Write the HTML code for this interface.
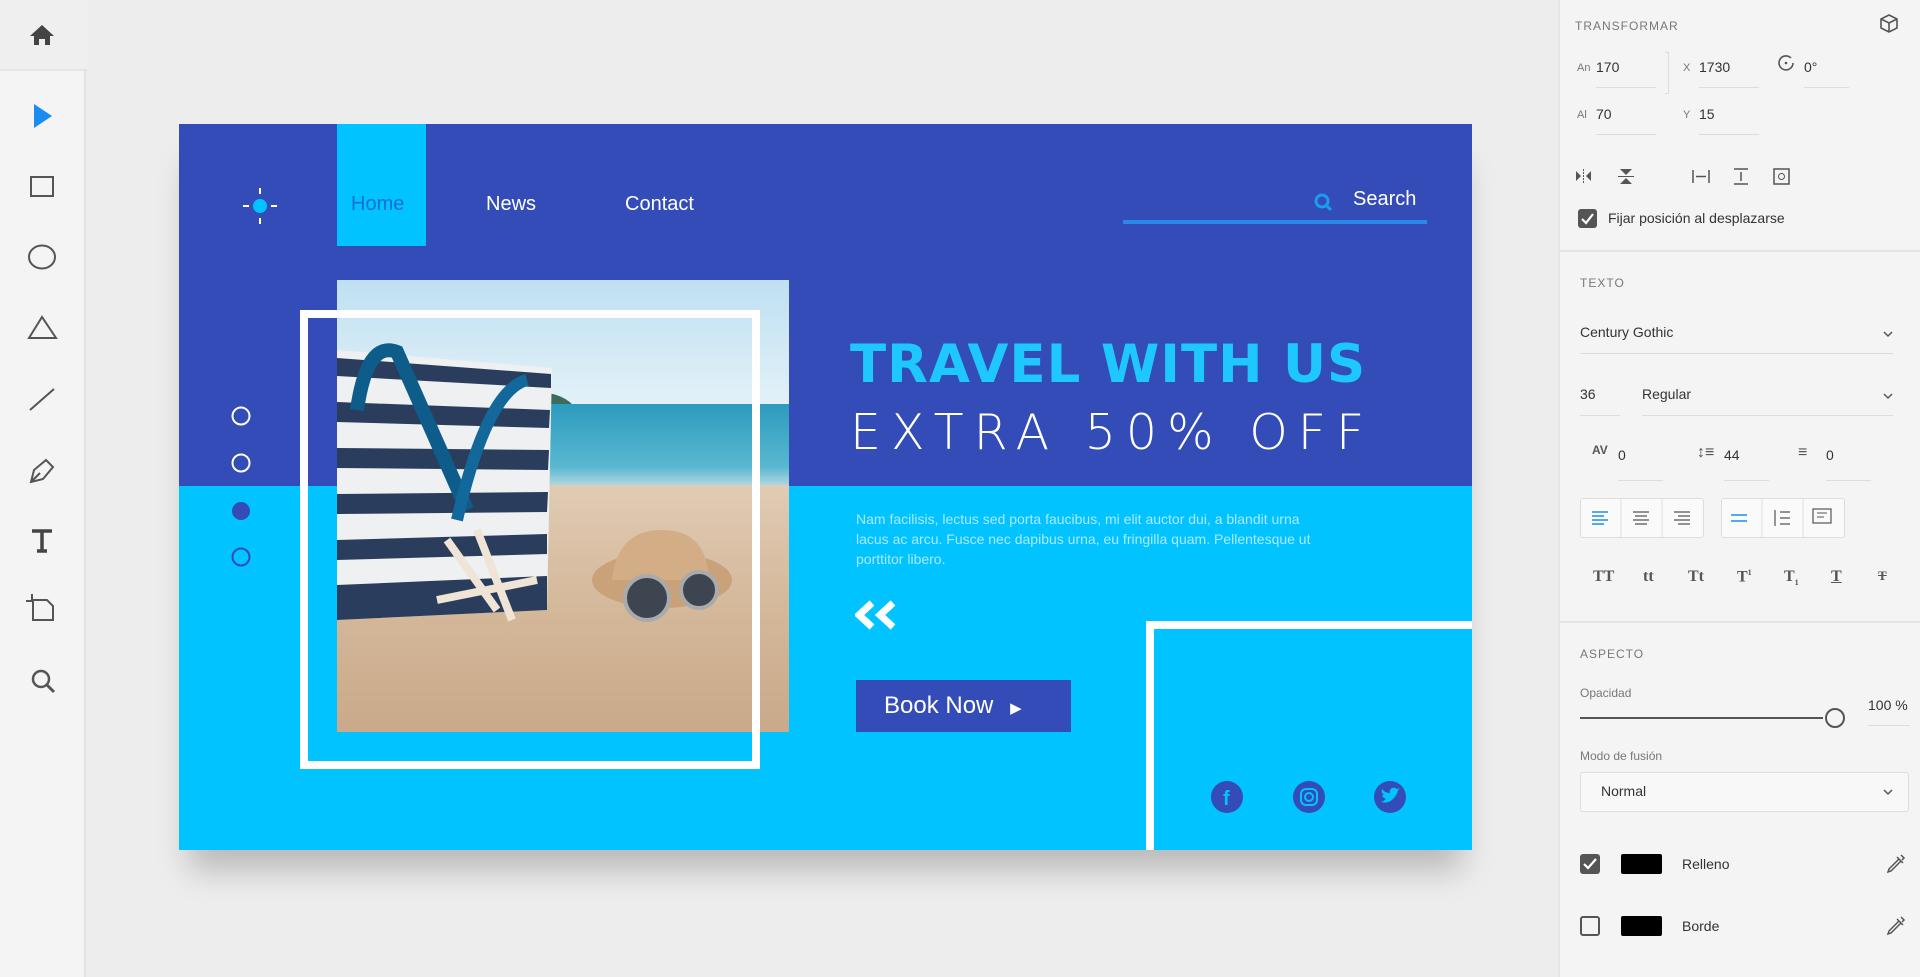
<!DOCTYPE html>
<html><head><meta charset="utf-8"><style>
*{margin:0;padding:0;box-sizing:border-box}
body{width:1920px;height:977px;overflow:hidden;background:#ededed;font-family:"Liberation Sans",sans-serif;position:relative}
.abs{position:absolute}
#tb{left:0;top:0;width:86px;height:977px;background:#f4f4f4;border-right:2px solid #e2e2e2}
#home{left:0;top:0;width:88px;height:71px;background:#efefef;border-bottom:2px solid #e4e4e4}
#rp{left:1558px;top:0;width:362px;height:977px;background:#f4f4f4;border-left:2px solid #e6e6e6;color:#333;font-size:14px}
.lbl{color:#777;font-size:12px;letter-spacing:1px}
.ul{height:1px;background:#ddd}
.sep{left:0;width:362px;height:2px;background:#e4e4e4}
#ab{left:179px;top:124px;width:1293px;height:726px;background:#00c3ff;box-shadow:0 30px 30px -10px rgba(0,0,0,.22);overflow:hidden}
.nav{color:#fff;font-size:20px;top:69px}
.chev{position:absolute;width:12px;height:8px}
</style></head><body>
<div id="tb" class="abs"></div>
<div id="home" class="abs"></div>
<svg class="abs" style="left:0;top:0" width="88" height="720">
<path d="M30 36 L42 25 L54 36 L50 36 L50 45 L45 45 L45 39 L39 39 L39 45 L34 45 L34 36Z" fill="#444"/>
<path d="M34 104 L52 116 L34 128Z" fill="#1a8cf0"/>
<rect x="31" y="177" width="22" height="19" fill="none" stroke="#555" stroke-width="2"/>
<ellipse cx="42" cy="257" rx="13" ry="11.5" fill="none" stroke="#555" stroke-width="2"/>
<path d="M29 338 L42 317 L56 338Z" fill="none" stroke="#555" stroke-width="2"/>
<path d="M30 410 L54 389" stroke="#555" stroke-width="2"/>
<path d="M31 482 L34 470 L46 460 L53 467 L43 479Z M31 482 L40 473" fill="none" stroke="#555" stroke-width="2"/>
<path d="M32 531 H52 M42 531 V551 M37 551 H47" stroke="#444" stroke-width="3.5"/>
<path d="M33 600 V620 H53 V606 L47 600Z M26 601 H33 M32 594 V600" fill="none" stroke="#555" stroke-width="2"/>
<circle cx="41" cy="679" r="8" fill="none" stroke="#555" stroke-width="2.5"/><path d="M47 685 L54 692" stroke="#555" stroke-width="3"/>
</svg>

<div id="ab" class="abs">
 <div class="abs" style="left:0;top:0;width:1293px;height:362px;background:#344cb7"></div>
 <div class="abs" style="left:158px;top:0;width:89px;height:122px;background:#00c3ff"></div>
 <svg class="abs" style="left:60px;top:60px" width="42" height="44"><circle cx="21" cy="22" r="7" fill="#00c3ff"/><path d="M21 4v6M21 34v6M4 22h6M32 22h6" stroke="#fff" stroke-width="2"/></svg>
 <div class="abs nav" style="left:172px;color:#1a6fd0">Home</div>
 <div class="abs nav" style="left:307px">News</div>
 <div class="abs nav" style="left:446px">Contact</div>
 <svg class="abs" style="left:1134px;top:68px" width="20" height="20"><circle cx="9" cy="9" r="6" fill="none" stroke="#1a9cf0" stroke-width="3"/><path d="M13 13l5 5" stroke="#1a9cf0" stroke-width="3"/></svg>
 <div class="abs" style="left:1174px;top:64px;color:#fff;font-size:20px">Search</div>
 <div class="abs" style="left:944px;top:96px;width:304px;height:4px;background:#2a88e8"></div>
 <svg class="abs" style="left:50px;top:280px" width="24" height="175">
  <circle cx="12" cy="12" r="8.5" fill="none" stroke="#fff" stroke-width="2"/>
  <circle cx="12" cy="59" r="8.5" fill="none" stroke="#fff" stroke-width="2"/>
  <circle cx="12" cy="107" r="9" fill="#344cb7"/>
  <circle cx="12" cy="153" r="8.5" fill="none" stroke="#344cb7" stroke-width="2"/>
 </svg>
 <svg class="abs" style="left:158px;top:156px" width="452" height="452">
  <defs><linearGradient id="sky" x1="0" y1="0" x2="0" y2="1"><stop offset="0" stop-color="#bfe0f2"/><stop offset="1" stop-color="#e4f2f8"/></linearGradient>
  <linearGradient id="sea" x1="0" y1="0" x2="0" y2="1"><stop offset="0" stop-color="#2c9bbf"/><stop offset=".7" stop-color="#5ab8d0"/><stop offset="1" stop-color="#d8e6e6"/></linearGradient>
  <linearGradient id="sand" x1="0" y1="0" x2="0" y2="1"><stop offset="0" stop-color="#e0cbb4"/><stop offset=".5" stop-color="#d4b89a"/><stop offset="1" stop-color="#c9a989"/></linearGradient></defs>
  <rect width="452" height="130" fill="url(#sky)"/>
  <path d="M150 120 Q220 100 240 130 L150 130Z" fill="#3c6c5c"/>
  <rect y="124" width="452" height="90" fill="url(#sea)"/>
  <rect y="205" width="452" height="247" fill="url(#sand)"/>
  <g>
   <path d="M0 70 L215 88 L210 330 L0 340Z" fill="#eef0f2"/>
   <path d="M0 78 L214 94 L214 108 L0 96Z M0 122 L213 130 L212 148 L0 142Z M0 168 L212 170 L211 190 L0 188Z M0 214 L211 212 L210 232 L0 234Z M0 260 L210 254 L210 274 L0 280Z M0 305 L210 296 L210 330 L0 340Z" fill="#2a3d5c"/>
   <path d="M20 130 Q30 60 60 72 Q90 140 130 230" fill="none" stroke="#0e5c8a" stroke-width="14"/>
   <path d="M120 240 Q150 110 190 100" fill="none" stroke="#12689a" stroke-width="12"/>
  </g>
  <ellipse cx="325" cy="300" rx="70" ry="28" fill="#c9a27a"/>
  <path d="M275 300 Q280 250 325 250 Q370 250 372 300Z" fill="#d2ad85"/>
  <circle cx="310" cy="318" r="22" fill="#3d4650" stroke="#aaa" stroke-width="4"/>
  <circle cx="362" cy="310" r="18" fill="#3d4650" stroke="#aaa" stroke-width="4"/>
  <path d="M110 260 L160 330 M140 250 L175 340 M100 320 L200 300" stroke="#efe4d6" stroke-width="8"/>
 </svg>
 <div class="abs" style="left:121px;top:186px;width:460px;height:459px;border:8px solid #fff"></div>
 <div class="abs" style="left:671px;top:210px;color:#1ec8ff;font-size:53px;font-weight:bold;letter-spacing:1px;font-family:'DejaVu Sans',sans-serif">TRAVEL WITH US</div>
 <div class="abs" style="left:671px;top:280px;color:#fff;font-size:49px;letter-spacing:10px;font-weight:300;font-family:'DejaVu Sans',sans-serif">EXTRA 50% OFF</div>
 <div class="abs" style="left:677px;top:385px;color:#c8f0ff;font-size:14px;line-height:20px;width:460px;opacity:.85">Nam facilisis, lectus sed porta faucibus, mi elit auctor dui, a blandit urna lacus ac arcu. Fusce nec dapibus urna, eu fringilla quam. Pellentesque ut porttitor libero.</div>
 <svg class="abs" style="left:676px;top:476px" width="46" height="30"><path d="M17 3 L4 15 L17 27 M38 3 L25 15 L38 27" fill="none" stroke="#fff" stroke-width="7"/></svg>
 <div class="abs" style="left:677px;top:556px;width:215px;height:52px;background:#344cb7;color:#fff;font-size:24px;line-height:52px;padding-left:28px">Book Now <span style="font-size:15px;margin-left:10px">&#9654;</span></div>
 <div class="abs" style="left:967px;top:497px;width:340px;height:240px;border:8px solid #fff"></div>
 <svg class="abs" style="left:1030px;top:656px" width="200" height="36">
  <circle cx="18" cy="17" r="16" fill="#344cb7"/><text x="14" y="25" fill="#00c3ff" font-size="20" font-weight="bold" font-family="Liberation Sans">f</text>
  <circle cx="100" cy="17" r="16" fill="#344cb7"/><rect x="92" y="9" width="16" height="16" rx="5" fill="none" stroke="#00c3ff" stroke-width="2"/><circle cx="100" cy="17" r="4" fill="none" stroke="#00c3ff" stroke-width="2"/>
  <circle cx="181" cy="17" r="16" fill="#344cb7"/><path d="M172 22 Q180 24 185 18 Q189 13 189 10 L191 8 L188 9 Q186 7 183 8 Q180 10 181 13 Q176 13 173 9 Q172 13 175 15 L173 15 Q174 18 177 19 Q175 21 172 22Z" fill="#00c3ff"/>
 </svg>
</div>

<div id="rp" class="abs">
 <div class="abs lbl" style="left:15px;top:19px">TRANSFORMAR</div>
 <svg class="abs" style="left:318px;top:13px" width="22" height="22"><path d="M11 2 L19 6 V15 L11 19 L3 15 V6Z M3 6 L11 10 L19 6 M11 10 V19" fill="none" stroke="#555" stroke-width="1.6"/></svg>
 <div class="abs" style="left:17px;top:62px;font-size:11px;color:#777">An</div>
 <div class="abs" style="left:36px;top:59px">170</div>
 <div class="abs ul" style="left:36px;top:87px;width:60px"></div>
 <div class="abs" style="left:123px;top:62px;font-size:11px;color:#777">X</div>
 <div class="abs" style="left:139px;top:59px">1730</div>
 <div class="abs ul" style="left:139px;top:87px;width:60px"></div>
 <svg class="abs" style="left:216px;top:52px" width="20" height="20"><path d="M15 6 A7 7 0 1 0 17 11" fill="none" stroke="#555" stroke-width="1.6"/><circle cx="10" cy="11" r="1.3" fill="#555"/></svg>
 <div class="abs" style="left:244px;top:59px">0°</div>
 <div class="abs ul" style="left:244px;top:87px;width:45px"></div>
 <div class="abs" style="left:105px;top:52px;width:4px;height:42px;border:1px solid #ddd;border-left:none"></div>
 <div class="abs" style="left:17px;top:109px;font-size:11px;color:#777">Al</div>
 <div class="abs" style="left:36px;top:106px">70</div>
 <div class="abs ul" style="left:36px;top:134px;width:60px"></div>
 <div class="abs" style="left:123px;top:109px;font-size:11px;color:#777">Y</div>
 <div class="abs" style="left:139px;top:106px">15</div>
 <div class="abs ul" style="left:139px;top:134px;width:60px"></div>
 <svg class="abs" style="left:14px;top:166px" width="250" height="22" fill="#555" stroke="#555">
  <path d="M2 5 L7 10 L2 15Z M17 5 L12 10 L17 15Z" stroke="none"/><path d="M9.5 3 V18" stroke-width="1" stroke-dasharray="2 1"/>
  <path d="M46 3 H58 L52 9Z M46 18 H58 L52 12Z" stroke="none"/><path d="M44 10.5 H60" stroke-width="1"/>
  <path d="M119 4 V17 M135 4 V17 M122 10.5 H132" stroke-width="1.5"/>
  <path d="M160 3 H174 M160 18 H174 M167 6 V15" stroke-width="1.5"/>
  <rect x="200" y="3" width="15" height="15" fill="none" stroke-width="1.5"/><circle cx="207.5" cy="10.5" r="3" fill="none"/>
 </svg>
 <div class="abs" style="left:18px;top:209px;width:19px;height:19px;background:#555;border-radius:3px"></div>
 <svg class="abs" style="left:18px;top:209px" width="19" height="19"><path d="M4 10 L8 14 L15 5" fill="none" stroke="#fff" stroke-width="2.2"/></svg>
 <div class="abs" style="left:48px;top:210px">Fijar posición al desplazarse</div>
 <div class="abs sep" style="top:250px"></div>
 <div class="abs lbl" style="left:20px;top:276px">TEXTO</div>
 <div class="abs" style="left:20px;top:324px">Century Gothic</div>
 <svg class="chev" style="left:322px;top:330px"><path d="M2 2 L6 6 L10 2" fill="none" stroke="#555" stroke-width="1.5"/></svg>
 <div class="abs ul" style="left:20px;top:353px;width:313px"></div>
 <div class="abs" style="left:20px;top:386px">36</div>
 <div class="abs ul" style="left:20px;top:415px;width:40px"></div>
 <div class="abs" style="left:82px;top:386px">Regular</div>
 <svg class="chev" style="left:322px;top:392px"><path d="M2 2 L6 6 L10 2" fill="none" stroke="#555" stroke-width="1.5"/></svg>
 <div class="abs ul" style="left:82px;top:415px;width:251px"></div>
 <div class="abs" style="left:32px;top:443px;font-size:12px;font-weight:bold;color:#555">AV</div>
 <div class="abs" style="left:58px;top:447px">0</div>
 <div class="abs ul" style="left:58px;top:480px;width:45px"></div>
 <div class="abs" style="left:137px;top:444px;font-size:16px;color:#555">&#8597;&#8801;</div>
 <div class="abs" style="left:164px;top:447px">44</div>
 <div class="abs ul" style="left:164px;top:480px;width:45px"></div>
 <div class="abs" style="left:238px;top:444px;font-size:16px;color:#555">&#8801;</div>
 <div class="abs" style="left:266px;top:447px">0</div>
 <div class="abs ul" style="left:266px;top:480px;width:45px"></div>
 <div class="abs" style="left:20px;top:498px;width:124px;height:40px;border:1px solid #ddd;border-radius:3px;background:#fafafa"></div>
 <div class="abs" style="left:161px;top:498px;width:124px;height:40px;border:1px solid #ddd;border-radius:3px;background:#fafafa"></div>
 <svg class="abs" style="left:20px;top:498px" width="270" height="40">
  <path d="M41 1V39M82 1V39M182 1V39M223 1V39" stroke="#ddd"/>
  <path d="M12 14H28M12 18H24M12 22H28M12 26H24" stroke="#1a8cf0" stroke-width="1.4"/>
  <path d="M53 14H69M55 18H67M53 22H69M55 26H67" stroke="#555" stroke-width="1.2"/>
  <path d="M94 14H110M98 18H110M94 22H110M98 26H110" stroke="#555" stroke-width="1.2"/>
  <path d="M151 17H167M151 23H167" stroke="#1a8cf0" stroke-width="1.4"/>
  <path d="M195 12V28M200 14H210M200 20H210M200 26H210" stroke="#555" stroke-width="1.2"/>
  <rect x="233" y="11" width="18" height="14" fill="none" stroke="#555" stroke-width="1.2"/><path d="M237 15H247M237 19H244" stroke="#555"/>
 </svg>
 <div class="abs" style="top:568px;left:0;width:362px;font-family:'Liberation Serif',serif;font-size:16px;color:#555;font-weight:bold">
  <span class="abs" style="left:33px">TT</span><span class="abs" style="left:83px">tt</span><span class="abs" style="left:128px">Tt</span><span class="abs" style="left:177px">T<sup style="font-size:8px">1</sup></span><span class="abs" style="left:224px">T<sub style="font-size:8px">1</sub></span><span class="abs" style="left:271px;text-decoration:underline">T</span><span class="abs" style="left:318px;text-decoration:line-through;font-size:13px">T</span>
 </div>
 <div class="abs sep" style="top:621px"></div>
 <div class="abs lbl" style="left:20px;top:647px">ASPECTO</div>
 <div class="abs" style="left:20px;top:686px;font-size:12px;color:#777">Opacidad</div>
 <div class="abs" style="left:20px;top:717px;width:243px;height:2px;background:#555"></div>
 <div class="abs" style="left:265px;top:708px;width:20px;height:20px;border:2px solid #555;border-radius:50%;background:#f4f4f4"></div>
 <div class="abs" style="left:308px;top:697px">100 %</div>
 <div class="abs ul" style="left:308px;top:725px;width:42px"></div>
 <div class="abs" style="left:20px;top:749px;font-size:12px;color:#777">Modo de fusión</div>
 <div class="abs" style="left:20px;top:772px;width:329px;height:40px;border:1px solid #ddd;border-radius:3px;background:#f8f8f8"></div>
 <div class="abs" style="left:41px;top:783px">Normal</div>
 <svg class="chev" style="left:322px;top:788px"><path d="M2 2 L6 6 L10 2" fill="none" stroke="#555" stroke-width="1.5"/></svg>
 <div class="abs" style="left:20px;top:854px;width:20px;height:20px;background:#555;border-radius:3px"></div>
 <svg class="abs" style="left:20px;top:854px" width="20" height="20"><path d="M4 10 L8 14 L16 5" fill="none" stroke="#fff" stroke-width="2.2"/></svg>
 <div class="abs" style="left:61px;top:854px;width:41px;height:20px;background:#000;border-radius:2px"></div>
 <div class="abs" style="left:122px;top:856px">Relleno</div>
 <div class="abs" style="left:20px;top:916px;width:20px;height:20px;border:2px solid #555;border-radius:3px"></div>
 <div class="abs" style="left:61px;top:916px;width:41px;height:20px;background:#000;border-radius:2px"></div>
 <div class="abs" style="left:122px;top:918px">Borde</div>
 <svg class="abs" style="left:326px;top:852px" width="20" height="90" fill="none" stroke="#555" stroke-width="1.5">
  <path d="M13 7 L3 17 L2 20 L5 19 L15 9 M11 5 L17 11 M15 3 L18 6 L16 8"/>
  <path d="M13 69 L3 79 L2 82 L5 81 L15 71 M11 67 L17 73 M15 65 L18 68 L16 70"/>
 </svg>
</div>
</body></html>
